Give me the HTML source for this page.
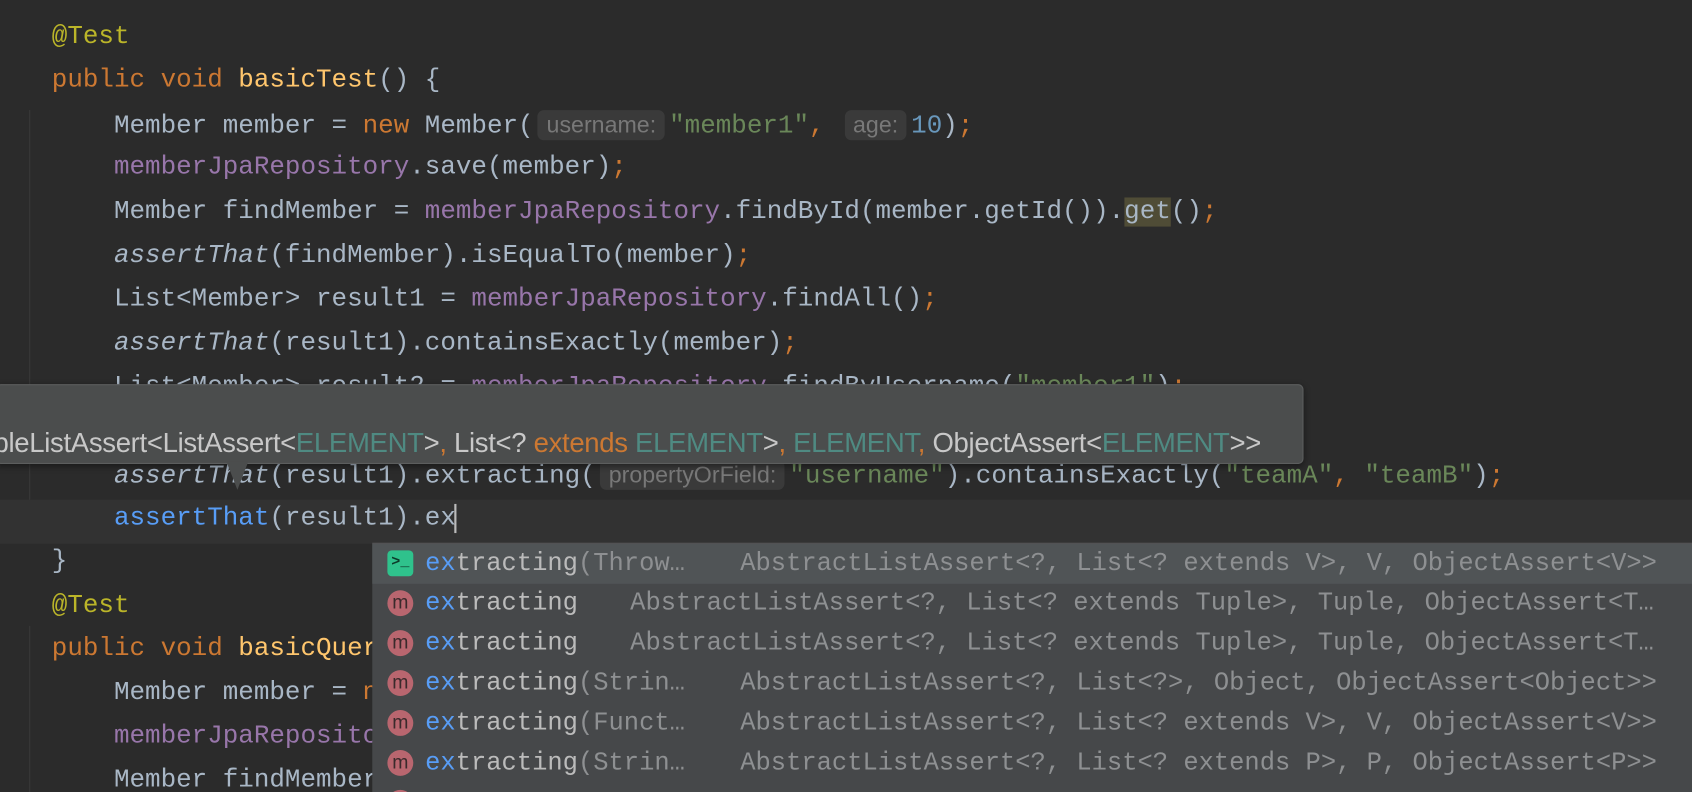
<!DOCTYPE html>
<html><head><meta charset="utf-8"><style>
html,body{margin:0;padding:0;background:#2b2b2b;width:1692px;height:792px;overflow:hidden}
#w{position:absolute;left:0;top:0;width:1568px;height:734px;transform:scale(1.07908);transform-origin:0 0;background:#2b2b2b;overflow:hidden}
.l{position:absolute;left:48px;height:40px;line-height:40px;font-family:"Liberation Mono",monospace;font-size:24px;color:#a9b7c6;white-space:pre}
.k{color:#cc7832}.a{color:#bbb529}.f{color:#ffc66d}.p{color:#9876aa}.s{color:#6a8759}.n{color:#6897bb}.i{font-style:italic}
.h{font-family:"Liberation Sans",sans-serif;font-size:21.5px;color:#787878;background:#3a3a3a;border-radius:6px;padding:2px 8px;margin:0 4px}
.cur{position:absolute;left:0;top:463px;width:1568px;height:41px;background:#323232}
.tip{position:absolute;left:-4px;top:356px;width:1210px;height:72px;background:#4b4d4d;border:1px solid #5c5e5e;border-radius:5px;box-shadow:0 2px 6px rgba(0,0,0,.4)}
.tipt{position:absolute;left:-6px;top:397px;font-family:"Liberation Sans",sans-serif;font-size:25.5px;letter-spacing:-0.3px;color:#c8c8c8;white-space:pre}
.t{color:#4f8a82}.o{color:#cc7832}
.pop{position:absolute;left:345px;top:503px;width:1240px;height:240px;background:#46484a;border-top:1px solid #555}
.row{position:absolute;left:0;width:1240px;height:37px;line-height:37px;font-family:"Liberation Mono",monospace;font-size:23.6px;color:#bbbbbb;white-space:pre}
.row .nm{position:absolute;left:49px}
.row .ty{position:absolute;color:#8e9092}
.b{color:#589df6}.g{color:#8e9092}
.ic{position:absolute;left:14px;top:6px;width:24px;height:24px;border-radius:50%;background:#b9666f;color:#3a2a2c;font-family:"Liberation Sans",sans-serif;font-size:18px;line-height:23px;text-align:center}
</style></head><body><div id="w">
<div style="position:absolute;left:27px;top:102px;width:1px;height:400px;background:#393939"></div>
<div style="position:absolute;left:27px;top:580px;width:1px;height:160px;background:#393939"></div>
<div class="cur"></div>
<div class="l" style="top:15px"><span class="a">@Test</span></div>
<div class="l" style="top:55px"><span class="k">public void </span><span class="f">basicTest</span>() {</div>
<div class="l" style="top:96px">    Member member = <span class="k">new </span>Member(<span class="h">username:</span><span class="s">"member1"</span><span class="k">, </span><span class="h">age:</span><span class="n">10</span>)<span class="k">;</span></div>
<div class="l" style="top:136px">    <span class="p">memberJpaRepository</span>.save(member)<span class="k">;</span></div>
<div class="l" style="top:177px">    Member findMember = <span class="p">memberJpaRepository</span>.findById(member.getId()).<span style="background:#4f4c36">get</span>()<span class="k">;</span></div>
<div class="l" style="top:218px">    <span class="i">assertThat</span>(findMember).isEqualTo(member)<span class="k">;</span></div>
<div class="l" style="top:258px">    List&lt;Member&gt; result1 = <span class="p">memberJpaRepository</span>.findAll()<span class="k">;</span></div>
<div class="l" style="top:299px">    <span class="i">assertThat</span>(result1).containsExactly(member)<span class="k">;</span></div>
<div class="l" style="top:339px">    List&lt;Member&gt; result2 = <span class="p">memberJpaRepository</span>.findByUsername(<span class="s">"member1"</span>)<span class="k">;</span></div>
<div class="l" style="top:420px">    <span class="i">assertThat</span>(result1).extracting(<span class="h">propertyOrField:</span><span class="s">"username"</span>).containsExactly(<span class="s">"teamA"</span><span class="k">, </span><span class="s">"teamB"</span>)<span class="k">;</span></div>
<div class="l" style="top:461px">    <span style="color:#589df6">assertThat</span>(result1).ex<span style="border-left:2px solid #bbb;margin-left:-1px"></span></div>
<div class="l" style="top:501px">}</div>
<div class="l" style="top:542px"><span class="a">@Test</span></div>
<div class="l" style="top:582px"><span class="k">public void </span><span class="f">basicQuerydsl</span>() {</div>
<div class="l" style="top:623px">    Member member = <span class="k">new </span>Member(</div>
<div class="l" style="top:663px">    <span class="p">memberJpaRepository</span>.save(member)<span class="k">;</span></div>
<div class="l" style="top:704px">    Member findMember = </div>
<div class="tip"></div>
<div style="position:absolute;left:210px;top:428px;width:0;height:0;border-left:10px solid transparent;border-right:10px solid transparent;border-top:26px solid #4b4d4d"></div>
<div class="tipt">bleListAssert&lt;ListAssert&lt;<span class="t">ELEMENT</span>&gt;<span class="o">,</span> List&lt;? <span class="o">extends</span> <span class="t">ELEMENT</span>&gt;<span class="o">,</span> <span class="t">ELEMENT</span><span class="o">,</span> ObjectAssert&lt;<span class="t">ELEMENT</span>&gt;&gt;</div>
<div class="pop">
<div class="row" style="top:0;background:#505456"><div class="ic" style="border-radius:4px;background:#2fc28c;color:#0d3b2a;font-size:14px;font-family:'Liberation Mono',monospace;font-weight:bold">&gt;_</div><span class="nm"><span class="b">ex</span>tracting<span class="g">(Throw…</span></span><span class="ty" style="left:341px">AbstractListAssert&lt;?, List&lt;? extends V&gt;, V, ObjectAssert&lt;V&gt;&gt;</span></div>
<div class="row" style="top:37px"><div class="ic">m</div><span class="nm"><span class="b">ex</span>tracting</span><span class="ty" style="left:239px">AbstractListAssert&lt;?, List&lt;? extends Tuple&gt;, Tuple, ObjectAssert&lt;T…</span></div>
<div class="row" style="top:74px"><div class="ic">m</div><span class="nm"><span class="b">ex</span>tracting</span><span class="ty" style="left:239px">AbstractListAssert&lt;?, List&lt;? extends Tuple&gt;, Tuple, ObjectAssert&lt;T…</span></div>
<div class="row" style="top:111px"><div class="ic">m</div><span class="nm"><span class="b">ex</span>tracting<span class="g">(Strin…</span></span><span class="ty" style="left:341px">AbstractListAssert&lt;?, List&lt;?&gt;, Object, ObjectAssert&lt;Object&gt;&gt;</span></div>
<div class="row" style="top:148px"><div class="ic">m</div><span class="nm"><span class="b">ex</span>tracting<span class="g">(Funct…</span></span><span class="ty" style="left:341px">AbstractListAssert&lt;?, List&lt;? extends V&gt;, V, ObjectAssert&lt;V&gt;&gt;</span></div>
<div class="row" style="top:185px"><div class="ic">m</div><span class="nm"><span class="b">ex</span>tracting<span class="g">(Strin…</span></span><span class="ty" style="left:341px">AbstractListAssert&lt;?, List&lt;? extends P&gt;, P, ObjectAssert&lt;P&gt;&gt;</span></div>
<div class="row" style="top:222px"><div class="ic">m</div></div>
</div>
</div></body></html>
